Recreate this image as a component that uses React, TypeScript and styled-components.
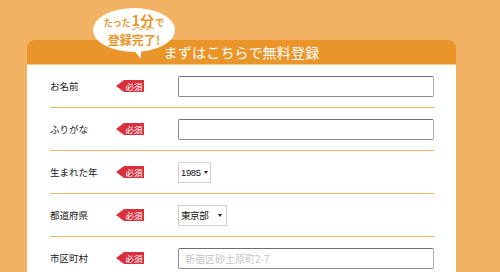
import styled, { createGlobalStyle } from 'styled-components'

const GlobalStyle = createGlobalStyle`
  body {
    margin: 0;
    background: #f1b264;
    font-family: "Noto Sans CJK JP", "Noto Sans", sans-serif;
  }
`

interface Field {
  label: string
  kind: 'text' | 'select'
  value?: string
  placeholder?: string
  width?: number
}

const fields: Field[] = [
  { label: 'お名前', kind: 'text' },
  { label: 'ふりがな', kind: 'text' },
  { label: '生まれた年', kind: 'select', value: '1985', width: 33 },
  { label: '都道府県', kind: 'select', value: '東京部', width: 49 },
  { label: '市区町村', kind: 'text', placeholder: '新宿区砂土原町2-7' },
]

const Page = styled.div`
  padding: 40px 0 0 27px;
  height: 232px;
  overflow: hidden;
`

const Panel = styled.div`
  position: relative;
  width: 429px;
`

const Header = styled.div`
  height: 24px;
  background: #e9952a;
  border-radius: 8px 8px 0 0;
  display: flex;
  align-items: center;
  justify-content: center;
  color: #fff;
  font-size: 14px;
  font-weight: 400;
  letter-spacing: 0.2px;
  border-bottom: 1px solid #f6c98e;
`

const Body = styled.div`
  background: #fff;
  padding: 0 22px 0 23px;
`

const Row = styled.div<{ $last?: boolean }>`
  display: flex;
  align-items: center;
  height: 42px;
  border-bottom: ${({ $last }) => ($last ? 'none' : '1px solid #f0b46a')};
`

const Label = styled.div`
  width: 66px;
  font-size: 9.5px;
  color: #222;
`

const Badge = styled.div`
  position: relative;
  margin-left: 8px;
  width: 20px;
  height: 12px;
  background: #d9303e;
  color: #fff;
  font-size: 8.5px;
  line-height: 12px;
  text-align: center;
  &::before {
    content: '';
    position: absolute;
    left: -8px;
    top: 0;
    border-style: solid;
    border-width: 6px 8px 6px 0;
    border-color: transparent #d9303e transparent transparent;
  }
`

const Control = styled.div`
  margin-left: 34px;
  flex: 1;
  display: flex;
`

const TextBox = styled.div`
  box-sizing: border-box;
  width: 256px;
  height: 21px;
  border: 1px solid #8c8c8c;
  border-top-color: #6e6e6e;
  border-right-color: #b0b0b0;
  border-radius: 2px;
  padding: 0 6px;
  display: flex;
  align-items: center;
  font-size: 10px;
  color: #c4c4c4;
`

const SelectBox = styled.div<{ $w: number }>`
  box-sizing: border-box;
  width: ${({ $w }) => $w}px;
  height: 21px;
  border: 1px solid #cfcfcf;
  display: flex;
  align-items: center;
  justify-content: space-between;
  padding: 0 4px 0 2px;
  font-family: "Liberation Sans", "Noto Sans CJK JP", sans-serif;
  font-size: 9.5px;
  letter-spacing: -0.4px;
  color: #111;
  white-space: nowrap;
`

const Caret = styled.span`
  flex-shrink: 0;
  margin-left: 3px;
  width: 0;
  height: 0;
  border-style: solid;
  border-width: 3px 2.5px 0 2.5px;
  border-color: #222 transparent transparent transparent;
`

const Bubble = styled.div`
  position: absolute;
  left: 66px;
  top: -32px;
  width: 82px;
  height: 44px;
  background: #fff;
  border-radius: 50%;
  display: flex;
  flex-direction: column;
  align-items: center;
  justify-content: center;
  color: #e9952a;
  font-weight: 700;
  &::after {
    content: '';
    position: absolute;
    left: 40px;
    bottom: -7px;
    border-style: solid;
    border-width: 10px 0 0 8px;
    border-color: #fff transparent transparent transparent;
  }
`

const BubbleTop = styled.div`
  font-size: 9px;
  line-height: 12px;
  display: flex;
  align-items: baseline;
`

const Big = styled.span`
  font-size: 14px;
  line-height: 12px;
  text-decoration: underline wavy #e9952a;
  text-decoration-thickness: 1px;
  text-underline-offset: 0px;
  margin: 0 1px;
`

const BubbleBottom = styled.div`
  font-size: 12px;
  line-height: 13px;
  margin-top: 4px;
`

export default function App() {
  return (
    <>
      <GlobalStyle />
      <Page>
        <Panel>
          <Bubble>
            <BubbleTop>
              たった<Big>1分</Big>で
            </BubbleTop>
            <BubbleBottom>登録完了!</BubbleBottom>
          </Bubble>
          <Header>まずはこちらで無料登録</Header>
          <Body>
            {fields.map((f, i) => (
              <Row key={f.label} $last={i === fields.length - 1}>
                <Label>{f.label}</Label>
                <Badge>必須</Badge>
                <Control>
                  {f.kind === 'text' ? (
                    <TextBox>{f.placeholder}</TextBox>
                  ) : (
                    <SelectBox $w={f.width ?? 40}>
                      {f.value}
                      <Caret />
                    </SelectBox>
                  )}
                </Control>
              </Row>
            ))}
          </Body>
        </Panel>
      </Page>
    </>
  )
}
